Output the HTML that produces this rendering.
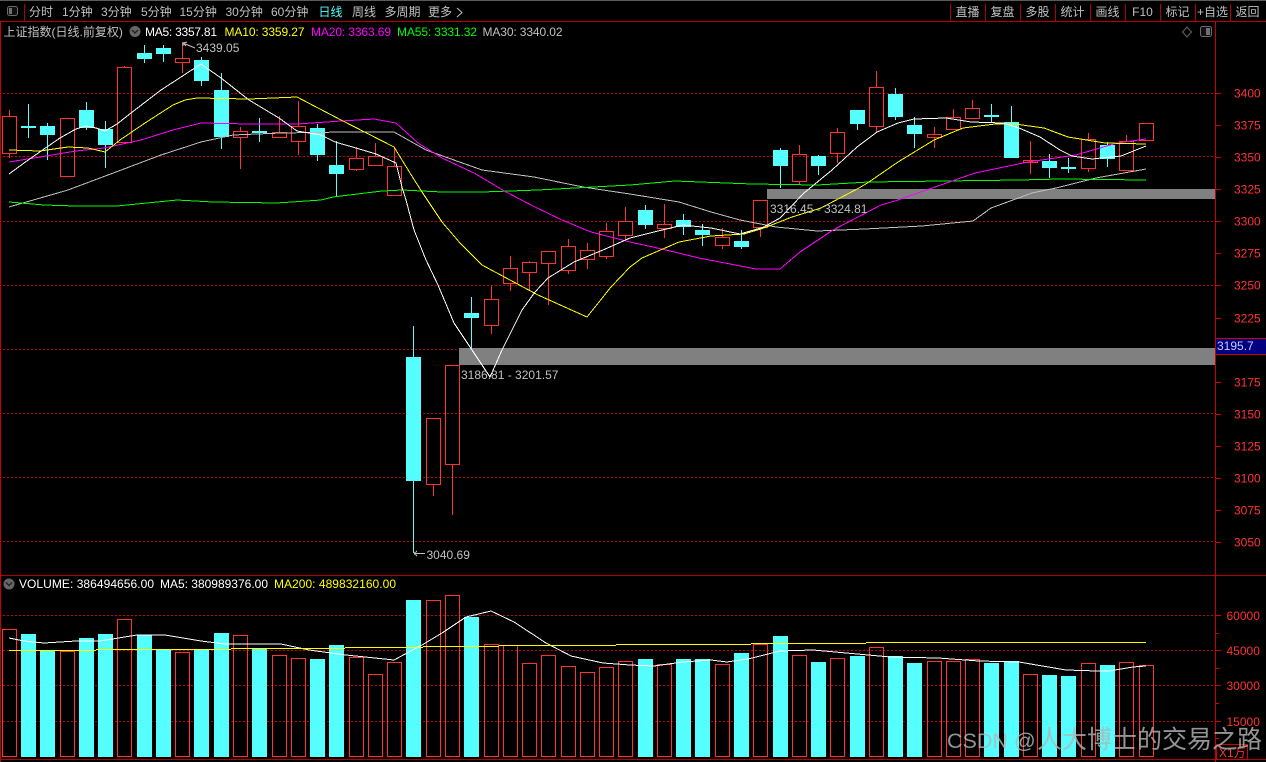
<!DOCTYPE html>
<html>
<head>
<meta charset="utf-8">
<title>上证指数</title>
<style>
html,body{margin:0;padding:0;background:#000;width:1266px;height:762px;overflow:hidden}
svg{display:block}
text{font-family:"Liberation Sans","WenQuanYi Zen Hei","Noto Sans CJK SC",sans-serif;font-size:12px;white-space:pre}
.m{fill:#c0c0c0}
.e{shape-rendering:crispEdges;fill:none}
.g{stroke:#c00000;stroke-dasharray:2 2}
.a{fill:#ff3232}
.c{text-anchor:middle;fill:#c0c0c0}
</style>
</head>
<body>
<svg width="1266" height="762" viewBox="0 0 1266 762" xmlns="http://www.w3.org/2000/svg">
<rect width="1266" height="762" fill="#000"/>
<rect width="1266" height="1" fill="#5a5a5a"/>

<!-- grid -->
<path class="e g" d="M3 93.5H1215M3 156.5H1215M3 221.5H1215M3 285.5H1215M3 349.5H1215M3 413.5H1215M3 477.5H1215M3 541.5H1215M3 615.5H1215M3 650.5H1215M3 685.5H1215M3 721.5H1215"/>

<!-- frame -->
<path class="e" stroke="#b00000" d="M0 21.5H1266M0 575.5H1266M0 759.5H1266M24.5 4V21M950.5 4V21M985.5 4V21M1020.5 4V21M1055.5 4V21M1090.5 4V21M1125.5 4V21M1160.5 4V21M1195.5 4V21M1230.5 4V21"/>
<path class="e" stroke="#c80000" d="M1215.5 21V762M0.5 21V762"/>
<path class="e" stroke="#d00000" d="M1216 93.5H1221M1216 125.5H1221M1216 157.5H1221M1216 189.5H1221M1216 221.5H1221M1216 253.5H1221M1216 285.5H1221M1216 318.5H1221M1216 382.5H1221M1216 414.5H1221M1216 446.5H1221M1216 478.5H1221M1216 510.5H1221M1216 542.5H1221M1216 615.5H1221M1216 633.5H1219M1216 650.5H1221M1216 668.5H1219M1216 685.5H1221M1216 703.5H1219M1216 721.5H1221M1216 738.5H1219"/>

<!-- red candle wicks -->
<path class="e" stroke="#ff3232" d="M9.5 110V116M9.5 154V158M124.5 66V67M182.5 42V58M182.5 63V73M240.5 127V131M240.5 138V169M279.5 116V132M298.5 101V126M298.5 142V155M356.5 147V158M356.5 170V171M375.5 143V156M394.5 147V166M433.5 485V496M452.5 465V515M491.5 286V299M491.5 326V334M510.5 256V268M510.5 284V291M529.5 261V262M529.5 273V290M548.5 264V305M568.5 239V246M568.5 271V274M587.5 243V250M587.5 260V269M606.5 223V231M606.5 257V259M625.5 207V221M625.5 236V240M664.5 204V224M664.5 229V238M722.5 228V237M722.5 246V249M760.5 228V237M799.5 145V154M799.5 182V184M837.5 128V132M837.5 154V163M876.5 71V87M876.5 127V133M934.5 127V134M934.5 138V148M953.5 109V117M972.5 100V108M1030.5 141V160M1030.5 163V174M1088.5 133V139M1088.5 169V172M1126.5 135V141"/>
<!-- red candle bodies -->
<path class="e" stroke="#ff3232" d="M2.5 116.5h14V153.5h-14zM60.5 118.5h14V176.5h-14zM117.5 67.5h14V142.5h-14zM175.5 58.5h14V62.5h-14zM233.5 131.5h14V137.5h-14zM272.5 132.5h14V137.5h-14zM291.5 126.5h14V141.5h-14zM349.5 158.5h14V169.5h-14zM368.5 156.5h14V165.5h-14zM387.5 166.5h14V195.5h-14zM426.5 418.5h14V484.5h-14zM445.5 365.5h14V464.5h-14zM484.5 299.5h14V325.5h-14zM503.5 268.5h14V283.5h-14zM522.5 262.5h14V272.5h-14zM541.5 251.5h14V263.5h-14zM561.5 246.5h14V270.5h-14zM580.5 250.5h14V259.5h-14zM599.5 231.5h14V256.5h-14zM618.5 221.5h14V235.5h-14zM657.5 224.5h14V228.5h-14zM715.5 237.5h14V245.5h-14zM753.5 200.5h14V227.5h-14zM792.5 154.5h14V181.5h-14zM830.5 132.5h14V153.5h-14zM869.5 87.5h14V126.5h-14zM927.5 134.5h14V137.5h-14zM946.5 117.5h14V129.5h-14zM965.5 108.5h14V118.5h-14zM1023.5 160.5h14V162.5h-14zM1081.5 139.5h14V168.5h-14zM1119.5 141.5h14V170.5h-14zM1139.5 123.5h14V140.5h-14z"/>
<!-- cyan wicks -->
<path class="e" stroke="#55ffff" d="M28.5 104V138M47.5 123V160M86.5 102V130M105.5 121V168M144.5 45V63M163.5 45V62M201.5 57V86M221.5 73V149M259.5 118V142M317.5 124V161M336.5 141V197M413.5 326V553M471.5 297V348M645.5 205V229M683.5 214V235M702.5 224V246M741.5 230V249M780.5 148V188M818.5 155V175M857.5 124V130M895.5 88V120M914.5 117V148M991.5 104V123M1011.5 106V158M1049.5 154V178M1068.5 158V173M1107.5 142V167"/>
<!-- cyan bodies -->
<path fill="#55ffff" shape-rendering="crispEdges" d="M21 126h15v2h-15zM40 126h15v9h-15zM79 110h15v18h-15zM98 129h15v16h-15zM137 53h15v6h-15zM156 48h15v6h-15zM194 60h15v21h-15zM214 90h15v47h-15zM252 131h15v2h-15zM310 128h15v27h-15zM329 165h15v9h-15zM406 357h15v124h-15zM464 313h15v5h-15zM638 210h15v15h-15zM676 220h15v7h-15zM695 230h15v5h-15zM734 241h15v6h-15zM773 150h15v16h-15zM811 156h15v10h-15zM850 110h15v14h-15zM888 94h15v23h-15zM907 125h15v9h-15zM984 115h15v2h-15zM1004 122h15v36h-15zM1042 161h15v7h-15zM1061 167h15v2h-15zM1100 145h15v14h-15z"/>

<!-- highlight zones -->
<rect x="767" y="189" width="448" height="10" fill="#808080"/>
<rect x="459" y="348" width="756" height="17" fill="#808080"/>

<!-- MA lines -->
<polyline class="e" stroke="#c0c0c0" points="9,207 68,190 100,178 161,155 201,142 233,135 281,133 346,132 394,132 426,150 482,170 534,177 583,187 630,194 679,202 711,212 740,220 776,227 817,231 865,229 922,226 973,221 991,208 1032,193 1056,188 1096,178 1146,169"/>
<polyline class="e" stroke="#00ff00" points="9,202 44,205 76,206 117,206 177,200 213,202 277,203 321,200 333,197 382,191 402,190 442,192 482,192 538,190 630,185 675,181 752,184 817,185 869,182 1019,180 1060,179 1146,180"/>
<polyline class="e" stroke="#ff00ff" points="9,162 40,157 76,151 104,148 141,140 173,130 201,123 249,124 297,124 341,121 374,119 396,123 418,143 442,158 474,173 506,192 535,207 562,220 591,232 630,242 662,249 699,258 756,269 780,269 800,252 833,230 881,205 898,200 955,180 975,173 1028,162 1076,155 1117,143 1146,139"/>
<polyline class="e" stroke="#ffff00" points="9,150 40,151 68,147 88,148 105,152 120,140 145,123 173,105 185,100 197,98 249,99 297,97 341,120 394,147 410,173 422,192 442,222 460,243 482,265 538,295 587,317 611,287 630,267 642,258 679,242 711,236 744,234 764,228 792,217 821,208 859,188 869,182 898,162 934,140 963,128 995,124 1015,124 1044,128 1068,137 1105,143 1146,144"/>
<polyline class="e" stroke="#ffffff" points="9,174 24,163 44,149 60,138 76,129 86,126 96,128 105,131 117,124 131,113 161,90 201,64 221,78 249,100 279,118 297,131 321,135 335,142 356,148 376,154 396,163 402,187 406,200 414,230 426,260 438,285 454,323 470,347 490,377 502,350 522,310 535,292 548,278 574,262 603,250 630,238 654,232 683,225 711,228 740,234 764,227 780,218 804,193 832,170 857,147 877,132 898,123 914,119 946,118 971,122 1003,123 1019,128 1040,137 1060,150 1072,156 1092,159 1121,156 1146,146"/>

<!-- volume bars -->
<path fill="#55ffff" shape-rendering="crispEdges" d="M21 634h15V757h-15zM40 650h15V757h-15zM79 638h15V757h-15zM98 634h15V757h-15zM137 635h15V757h-15zM156 649h15V757h-15zM194 649h15V757h-15zM214 633h15V757h-15zM252 648h15V757h-15zM310 659h15V757h-15zM329 645h15V757h-15zM406 600h15V757h-15zM464 617h15V757h-15zM638 659h15V757h-15zM676 659h15V757h-15zM695 659h15V757h-15zM734 653h15V757h-15zM773 636h15V757h-15zM811 662h15V757h-15zM850 656h15V757h-15zM888 656h15V757h-15zM907 663h15V757h-15zM984 663h15V757h-15zM1004 661h15V757h-15zM1042 675h15V757h-15zM1061 676h15V757h-15zM1100 665h15V757h-15z"/>
<path class="e" stroke="#ff3232" d="M2.5 629.5h14V756.5h-14zM60.5 651.5h14V756.5h-14zM117.5 619.5h14V756.5h-14zM175.5 652.5h14V756.5h-14zM233.5 635.5h14V756.5h-14zM272.5 655.5h14V756.5h-14zM291.5 658.5h14V756.5h-14zM349.5 657.5h14V756.5h-14zM368.5 674.5h14V756.5h-14zM387.5 662.5h14V756.5h-14zM426.5 600.5h14V756.5h-14zM445.5 595.5h14V756.5h-14zM484.5 644.5h14V756.5h-14zM503.5 645.5h14V756.5h-14zM522.5 663.5h14V756.5h-14zM541.5 655.5h14V756.5h-14zM561.5 666.5h14V756.5h-14zM580.5 672.5h14V756.5h-14zM599.5 667.5h14V756.5h-14zM618.5 661.5h14V756.5h-14zM657.5 664.5h14V756.5h-14zM715.5 664.5h14V756.5h-14zM753.5 644.5h14V756.5h-14zM792.5 655.5h14V756.5h-14zM830.5 658.5h14V756.5h-14zM869.5 647.5h14V756.5h-14zM927.5 661.5h14V756.5h-14zM946.5 661.5h14V756.5h-14zM965.5 659.5h14V756.5h-14zM1023.5 674.5h14V756.5h-14zM1081.5 663.5h14V756.5h-14zM1119.5 662.5h14V756.5h-14zM1139.5 665.5h14V756.5h-14z"/>
<polyline class="e" stroke="#ffffff" points="9,638 24,641 44,643 76,641 100,641 137,635 165,635 201,641 225,644 281,644 309,650 346,655 394,660 422,645 442,633 466,617 491,611 514,622 546,643 571,656 603,663 630,665 654,666 683,662 711,660 727,662 748,659 780,651 813,650 857,654 890,657 938,658 979,661 1019,662 1066,670 1097,671 1109,671 1133,667 1146,666"/>
<path class="e" stroke="#ffff00" d="M9 650.5H96M96 649.5H231M231 648.5H345M345 647.5H423M423 646.5H499M499 645.5H616M616 644.5H751M751 643.5H866M866 642.5H1146"/>

<!-- toolbar -->
<rect x="7.5" y="6.5" width="10" height="9" rx="2" fill="#111" stroke="#6a6a6a"/>
<rect x="9" y="8" width="3" height="6" fill="#707070"/>
<g class="m">
<text x="29" y="16">分时</text>
<text x="62" y="16">1分钟</text>
<text x="101" y="16">3分钟</text>
<text x="141" y="16">5分钟</text>
<text x="179.5" y="16">15分钟</text>
<text x="225.5" y="16">30分钟</text>
<text x="271" y="16">60分钟</text>
<text x="318.5" y="16" style="fill:#55ffff">日线</text>
<text x="352" y="16">周线</text>
<text x="384.5" y="16">多周期</text>
<text x="428" y="16">更多</text>
</g>
<path d="M457 8L462 12.5L457 17" fill="none" stroke="#c0c0c0"/>
<text class="c" x="967.5" y="16">直播</text>
<text class="c" x="1002.5" y="16">复盘</text>
<text class="c" x="1037.5" y="16">多股</text>
<text class="c" x="1072.5" y="16">统计</text>
<text class="c" x="1107.5" y="16">画线</text>
<text class="c" x="1142.5" y="16">F10</text>
<text class="c" x="1177.5" y="16">标记</text>
<text class="c" x="1212.5" y="16">+自选</text>
<text class="c" x="1247.5" y="16">返回</text>

<!-- header row -->
<text class="m" x="3.5" y="36">上证指数(日线.前复权)</text>
<circle cx="135" cy="31.5" r="5.5" fill="#666"/>
<path d="M132 30L135 33L138 30" fill="none" stroke="#222" stroke-width="1.4"/>
<text x="145" y="36" fill="#fff" textLength="72">MA5: 3357.81</text>
<text x="224.5" y="36" fill="#ffff00" textLength="80">MA10: 3359.27</text>
<text x="311" y="36" fill="#ff00ff" textLength="80">MA20: 3363.69</text>
<text x="397" y="36" fill="#00ff00" textLength="80">MA55: 3331.32</text>
<text x="482.5" y="36" fill="#c0c0c0" textLength="80">MA30: 3340.02</text>
<path d="M1187 27L1191.5 32L1187 37L1182.5 32Z" fill="none" stroke="#666"/>
<rect x="1200.5" y="26.5" width="11" height="10" rx="2" fill="#111" stroke="#6a6a6a"/>
<rect x="1206" y="28" width="4" height="7" fill="#707070"/>

<!-- annotations -->
<path d="M183 46V43L195 48M183 43L187 42M183 43L186 46" fill="none" stroke="#c0c0c0"/>
<text class="m" x="196" y="52">3439.05</text>
<path class="e" stroke="#c0c0c0" d="M414 553.5H425M414 553.5L417 551M414 553.5L417 556"/>
<text class="m" x="426.5" y="559">3040.69</text>
<text class="m" x="461" y="379">3186.81 - 3201.57</text>
<text class="m" x="770" y="213">3316.45 - 3324.81</text>

<!-- volume header -->
<circle cx="9" cy="584" r="5.5" fill="#666"/>
<path d="M6 582.5L9 585.5L12 582.5" fill="none" stroke="#222" stroke-width="1.4"/>
<text x="19" y="588" fill="#fff" textLength="135">VOLUME: 386494656.00</text>
<text x="160" y="588" fill="#fff" textLength="108">MA5: 380989376.00</text>
<text x="274" y="588" fill="#ffff00" textLength="122">MA200: 489832160.00</text>

<!-- axis labels -->
<g class="a">
<text x="1234" y="97.5">3400</text>
<text x="1234" y="129.5">3375</text>
<text x="1234" y="161.5">3350</text>
<text x="1234" y="193.5">3325</text>
<text x="1234" y="225.5">3300</text>
<text x="1234" y="257.5">3275</text>
<text x="1234" y="289.5">3250</text>
<text x="1234" y="322.5">3225</text>
<text x="1234" y="386.5">3175</text>
<text x="1234" y="418.5">3150</text>
<text x="1234" y="450.5">3125</text>
<text x="1234" y="482.5">3100</text>
<text x="1234" y="514.5">3075</text>
<text x="1234" y="546.5">3050</text>
<text x="1226.5" y="620">60000</text>
<text x="1226.5" y="655">45000</text>
<text x="1226.5" y="690">30000</text>
<text x="1226.5" y="726">15000</text>
</g>
<rect x="1216" y="338.5" width="50" height="15.5" fill="#000080"/>
<path class="e" stroke="#d00000" d="M1216 338.5H1266M1216 354.5H1266"/>
<text x="1217" y="350" fill="#c8c8ff">3195.7</text>
<rect x="1216.5" y="744.5" width="31" height="15" fill="none" stroke="#d00000" shape-rendering="crispEdges"/>
<text x="1219" y="757" fill="#ff3232">X1万</text>

<!-- watermark -->
<text x="947" y="748" style="font-size:21.5px;fill:#b4b4b4;fill-opacity:.82">CSDN @</text>
<text x="1037" y="748" style="font-size:25px;fill:#b4b4b4;fill-opacity:.82;font-family:'Noto Sans CJK SC',sans-serif">人大博士的交易之路</text>
</svg>
</body>
</html>
